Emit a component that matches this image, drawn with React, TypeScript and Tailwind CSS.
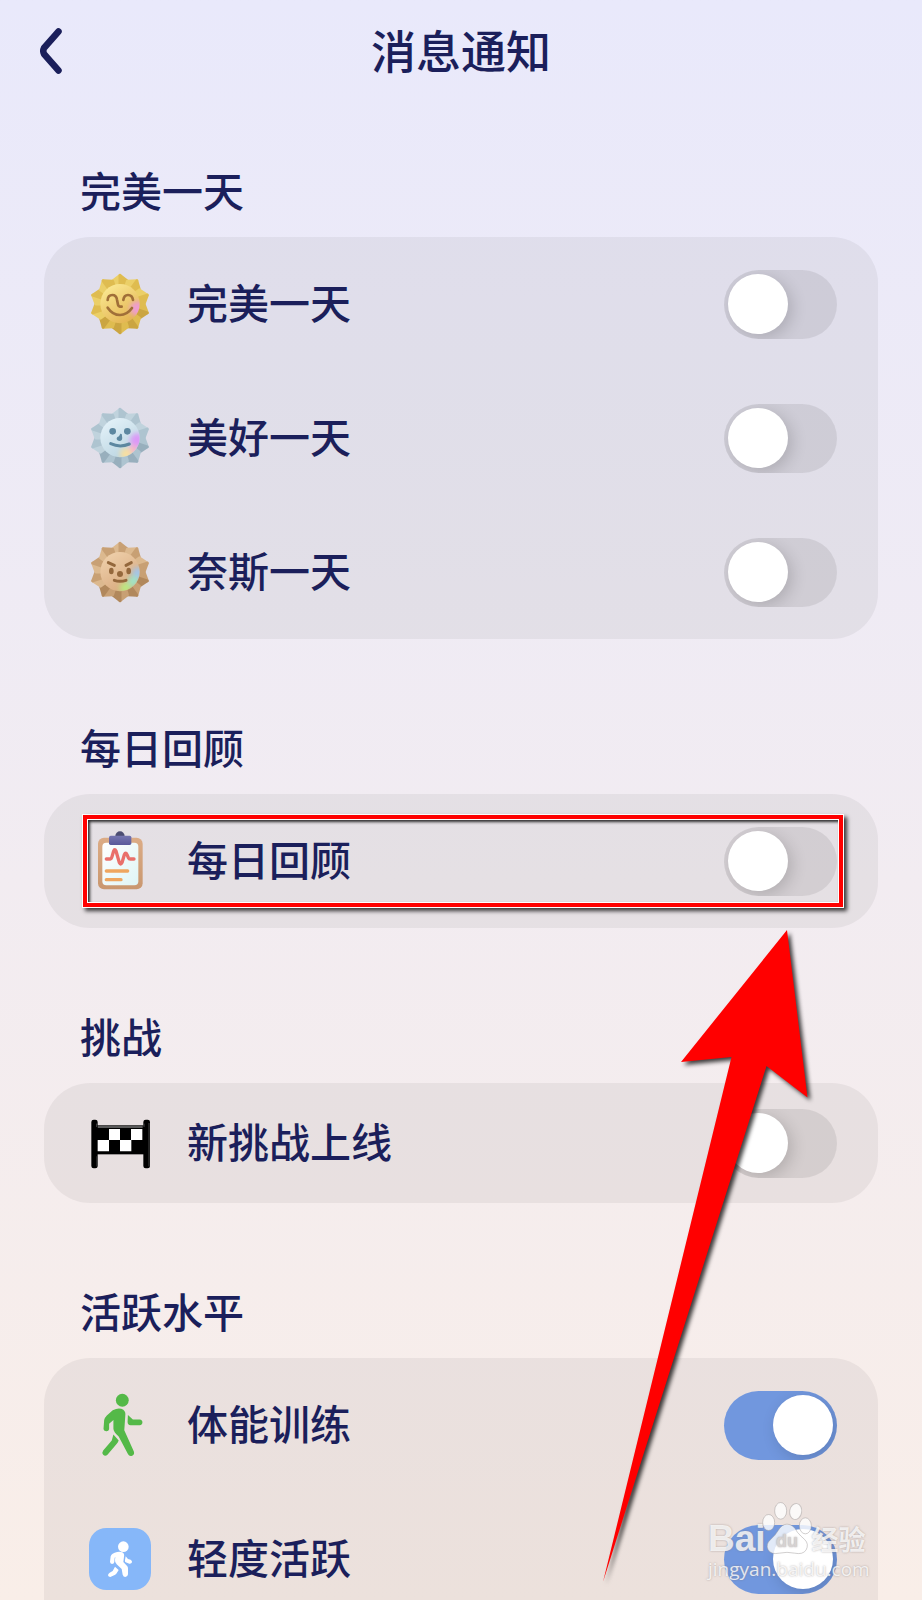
import React from "react";

type Theme = {
  id: string;
  light: string;
  mid: string;
  dark: string;
  face: [string, string];
  ink: string;
};

const gold: Theme = { id: "gold", light: "#ebcf68", mid: "#dfbc50", dark: "#cba541", face: ["#fbe993", "#e2b14e"], ink: "#a06f38" };
const silver: Theme = { id: "silver", light: "#c0d3dd", mid: "#aec4d0", dark: "#98afbd", face: ["#e4f2f9", "#b8d3e0"], ink: "#5d87a0" };
const bronze: Theme = { id: "bronze", light: "#dcb98f", mid: "#c8a074", dark: "#b1885c", face: ["#efd0ab", "#d6a77b"], ink: "#94683c" };

function point(angle: number, radius: number): [number, number] {
  const a = (angle * Math.PI) / 180;
  return [Math.round(Math.sin(a) * radius * 10) / 10, Math.round(-Math.cos(a) * radius * 10) / 10];
}

function SunBadge({ theme, children }: { theme: Theme; children: React.ReactNode }) {
  const rays = Array.from({ length: 10 }, (_, i) => {
    const tip = point(i * 36, 86);
    const left = point(i * 36 - 18, 72);
    const right = point(i * 36 + 18, 72);
    const low = i >= 3 && i <= 6;
    return (
      <g key={i} strokeWidth="9" strokeLinejoin="round">
        <path d={`M0 0 L${left} L${tip} Z`} fill={low ? theme.mid : theme.light} stroke={low ? theme.mid : theme.light} />
        <path d={`M0 0 L${tip} L${right} Z`} fill={low ? theme.dark : theme.mid} stroke={low ? theme.dark : theme.mid} />
      </g>
    );
  });
  return (
    <svg viewBox="-93 -93 186 186" className="size-full" aria-hidden="true">
      <defs>
        <linearGradient id={`${theme.id}-face`} x1="0.2" y1="0" x2="0.8" y2="1">
          <stop offset="0" stopColor={theme.face[0]} />
          <stop offset="1" stopColor={theme.face[1]} />
        </linearGradient>
        <clipPath id={`${theme.id}-clip`}>
          <circle cx="0" cy="-1" r="59" />
        </clipPath>
        <filter id={`${theme.id}-soft`} x="-60%" y="-60%" width="220%" height="220%">
          <feGaussianBlur stdDeviation="8" />
        </filter>
      </defs>
      {rays}
      <circle cx="0" cy="-1" r="59" fill={`url(#${theme.id}-face)`} />
      <g clipPath={`url(#${theme.id}-clip)`}>
        <g filter={`url(#${theme.id}-soft)`}>
          {theme.id === "gold" && <circle cx="52" cy="14" r="22" fill="#ee9bd2" />}
          {theme.id === "silver" && (
            <>
              <circle cx="52" cy="8" r="22" fill="#dc98f8" />
              <circle cx="40" cy="34" r="14" fill="#f9b3c8" />
              <circle cx="18" cy="48" r="18" fill="#f8dfa0" />
            </>
          )}
          {theme.id === "bronze" && (
            <>
              <circle cx="54" cy="4" r="19" fill="#a5c4e6" />
              <circle cx="40" cy="28" r="17" fill="#a0e3c4" />
              <circle cx="16" cy="48" r="17" fill="#bce781" />
            </>
          )}
        </g>
      </g>
      <g fill="none" stroke={theme.ink} strokeWidth="8" strokeLinecap="round" strokeLinejoin="round">
        {children}
      </g>
    </svg>
  );
}

const PerfectDay = () => (
  <SunBadge theme={gold}>
    <path d="M-37 -12 Q-36 -27 -23 -27 Q-11 -27 -9 -13 L-6 2 Q-5 8 5 8" />
    <path d="M10 -12 Q12 -27 24 -27 Q37 -27 39 -12" />
    <path d="M-37 11 Q-22 33 0 33 Q21 33 36 12" />
  </SunBadge>
);

const GoodDay = () => (
  <SunBadge theme={silver}>
    <g fill={silver.ink} stroke="none">
      <circle cx="-22" cy="-20" r="10" />
      <circle cx="22" cy="-20" r="10" />
      <path d="M1 -13 Q7 -14 6 -6 Q9 8 0 9 Q-10 9 -10 1 Q-9 -4 -3 -5 Z" />
    </g>
    <path d="M-28 17 Q0 30 28 18" strokeWidth="9" />
  </SunBadge>
);

const NiceDay = () => (
  <SunBadge theme={bronze}>
    <g fill={bronze.ink} stroke="none">
      <ellipse cx="-26" cy="-3" rx="7" ry="10" />
      <ellipse cx="26" cy="-3" rx="7" ry="10" />
      <circle cx="0" cy="6" r="9" />
    </g>
    <path d="M-35 -28 L-17 -20 M34 -28 L18 -20 M-17 25 Q0 31 18 25" strokeWidth="9" />
  </SunBadge>
);

const Clipboard = () => (
  <svg viewBox="57 90 186 186" className="size-full" aria-hidden="true">
    <defs>
      <linearGradient id="board" x1="0" y1="0" x2="0" y2="1">
        <stop offset="0" stopColor="#dcac86" />
        <stop offset="1" stopColor="#c9976f" />
      </linearGradient>
      <linearGradient id="paper" x1="0" y1="0" x2="1" y2="1">
        <stop offset="0" stopColor="#ffffff" />
        <stop offset="1" stopColor="#dff5f5" />
      </linearGradient>
      <linearGradient id="clip" x1="0" y1="0" x2="0" y2="1">
        <stop offset="0" stopColor="#7676b0" />
        <stop offset="1" stopColor="#59599a" />
      </linearGradient>
    </defs>
    <rect x="84" y="113" width="134" height="155" rx="18" fill="url(#board)" />
    <rect x="97" y="128" width="108" height="128" rx="12" fill="url(#paper)" />
    <circle cx="150" cy="108" r="14" fill="#4c4d72" />
    <rect x="117" y="107" width="67" height="28" rx="5" fill="url(#clip)" />
    <g fill="none" strokeLinecap="round" strokeLinejoin="round" strokeWidth="10">
      <path d="M109 177 H121 Q124 177 126 170 L131 153 Q134 145 138 153 L148 188 Q152 197 156 188 L163 164 Q167 155 171 164 L175 173 Q177 177 181 177 H192" stroke="#e9706b" />
      <path d="M109 213 H173 M109 239 H153" stroke="#efa65f" />
    </g>
  </svg>
);

const Finish = () => (
  <svg viewBox="57 36 186 186" className="size-full" aria-hidden="true">
    <rect x="76" y="76" width="148" height="87" fill="#000" />
    <path d="M82 81 H218" stroke="#777" strokeWidth="4" />
    <path d="M117 87 h33 v33 h-33z M183 87 h34 v33 h-34z M81 120 h36 v34 h-36z M150 120 h34 v34 h-34z" fill="#fff" />
    <rect x="64" y="59" width="19" height="146" rx="7" fill="#000" />
    <rect x="220" y="59" width="20" height="146" rx="7" fill="#000" />
    <path d="M80 72 V80 M222 72 V80 M81 170 V198 M237 70 V198" stroke="#444" strokeWidth="3" strokeLinecap="round" />
  </svg>
);

const Walker = () => (
  <svg viewBox="57 43 186 188" className="size-full overflow-visible" aria-hidden="true">
    <g fill="#54b948">
      <circle cx="157" cy="62" r="19.5" />
      <path d="M128 92 Q148 82 160 91 Q168 97 166 110 L163 153 L192 217 Q195 226 187 230 Q178 233 174 225 L146 172 Q130 157 130 148 L130 122 L117 133 L117 150 Q115 157 108 156 Q100 155 100 149 L102 122 Q104 114 110 108 Z" />
      <path d="M130 166 L146 184 Q144 190 139 195 L112 227 Q105 233 99 227 Q94 221 99 214 L125 184 Z" />
      <path d="M174 107 L189 120 H210 Q218 121 218 129 Q218 137 210 138 H182 Q173 137 173 128 Z" />
    </g>
  </svg>
);

const LightActive = () => (
  <svg viewBox="57 444 186 186" className="size-full" aria-hidden="true">
    <rect x="57" y="444" width="186" height="186" rx="52" fill="#86b7f9" />
    <g fill="#fff">
      <circle cx="160" cy="500" r="16" />
      <path d="M134 518 Q148 513 157 517 Q164 521 162 530 L160 546 L172 559 Q174 562 174 566 L174 583 Q173 591 166 591 Q160 591 158 584 L155 567 L140 553 Q134 547 135 540 L136 531 L134 533 L133 546 Q132 552 126 552 Q120 551 120 545 L122 529 Q124 523 128 521 Z" />
      <path d="M135 560 L146 570 L140 580 Q138 583 134 585 L121 591 Q115 591 114 586 Q114 581 119 578 L128 573 Z" />
      <path d="M167 529 L174 537 L182 539 Q187 542 186 547 Q184 552 178 551 L167 547 Q164 545 165 540 Z" />
    </g>
  </svg>
);

type Item = { id: string; label: string; icon: React.ReactNode; on?: boolean };

function SettingRow({ item, rowClass }: { item: Item; rowClass: string }) {
  return (
    <li className={`flex items-center gap-9 pr-[41px] pl-[45px] ${rowClass}`}>
      <span className="size-[62px] shrink-0">{item.icon}</span>
      <label htmlFor={item.id} className="flex-1 pb-[6px] text-[41px] leading-[60px]">
        {item.label}
      </label>
      <input
        id={item.id}
        type="checkbox"
        role="switch"
        defaultChecked={item.on}
        className="flex h-[69px] w-[113px] shrink-0 appearance-none items-center overflow-hidden rounded-full bg-black/8 px-1 before:size-[60px] before:rounded-full before:bg-white before:shadow-[4px_4px_16px_rgba(0,0,0,0.16)] checked:justify-end checked:bg-[#7197de]"
      />
    </li>
  );
}

function Section({
  title,
  items,
  rowClass = "h-[134px]",
  cardClass = "rounded-[46px]",
  children,
}: {
  title: string;
  items: Item[];
  rowClass?: string;
  cardClass?: string;
  children?: React.ReactNode;
}) {
  return (
    <section>
      <h2 className="mb-5 pl-9 text-[41px] leading-[55px] font-medium">{title}</h2>
      <div className={`relative bg-black/5 ${cardClass}`}>
        <ul>
          {items.map((item) => (
            <SettingRow key={item.id} item={item} rowClass={rowClass} />
          ))}
        </ul>
        {children}
      </div>
    </section>
  );
}

function Watermark() {
  return (
    <div className="absolute right-[50px] bottom-[19px] flex w-[164px] flex-col text-white/80 [text-shadow:0_0_2px_rgba(120,110,110,0.6)]">
      <div className="flex h-[60px] items-end">
        <span className="font-['Liberation_Sans',sans-serif] text-[37px] leading-9 font-bold">Bai</span>
        <svg viewBox="0 0 150 170" className="-ml-1 h-[57px] w-[50px] shrink-0" role="img" aria-label="du">
          <g fill="#fff" fillOpacity="0.8" stroke="#9a9494" strokeOpacity="0.45" strokeWidth="3">
            <ellipse cx="20" cy="67" rx="18" ry="24" />
            <ellipse cx="56" cy="32" rx="18" ry="25" />
            <ellipse cx="101" cy="34" rx="18" ry="24" transform="rotate(10 101 34)" />
            <ellipse cx="130" cy="77" rx="18" ry="24" />
            <path d="M75 72 Q94 72 106 96 Q116 108 128 118 Q142 132 132 150 Q122 164 98 159 Q75 154 52 159 Q26 164 18 148 Q10 132 26 118 Q40 106 48 92 Q59 72 75 72 Z" />
          </g>
          <text x="75" y="140" textAnchor="middle" fontFamily="Liberation Sans, sans-serif" fontSize="54" fontWeight="700" fill="#d6d2d2">
            du
          </text>
        </svg>
        <span className="text-[27px] leading-9 font-bold">经验</span>
      </div>
      <span className="font-['Open_Sans',sans-serif] text-[19px] leading-6 font-normal">jingyan.baidu.com</span>
    </div>
  );
}

export default function App() {
  return (
    <div className="relative h-screen overflow-hidden bg-linear-to-b from-[#e9e9fb] via-[#f2ecf1] via-55% to-[#f9eee8] font-['Noto_Sans_CJK_SC',sans-serif] font-medium text-[#1b1f5b]">
      <header className="grid h-[104px] grid-cols-[1fr_auto_1fr] items-center px-9">
        <button type="button" aria-label="返回" className="w-8">
          <svg viewBox="0 0 32 54" className="h-[54px] w-8" fill="none" stroke="currentColor" strokeWidth="6.5" strokeLinecap="round" strokeLinejoin="round" aria-hidden="true">
            <path d="M22.500 6.500 L8 23 Q6.500 26 8 29 L22.500 45.500" />
          </svg>
        </button>
        <h1 className="pb-1 text-[45px] leading-[60px] font-medium">消息通知</h1>
      </header>

      <main className="flex flex-col gap-20 px-11 pt-[58px]">
        <Section
          title="完美一天"
          items={[
            { id: "perfect", label: "完美一天", icon: <PerfectDay /> },
            { id: "good", label: "美好一天", icon: <GoodDay /> },
            { id: "nice", label: "奈斯一天", icon: <NiceDay /> },
          ]}
        />
        <Section title="每日回顾" items={[{ id: "review", label: "每日回顾", icon: <Clipboard /> }]}>
          <div className="pointer-events-none absolute inset-y-5 right-[34px] left-[38px] border border-white/90 shadow-[3px_3px_4px_rgba(0,0,0,0.75)]">
            <div className="size-full border-4 border-[#ff0000]">
              <div className="size-full border border-white shadow-[inset_2px_2px_3px_rgba(0,0,0,0.8)]" />
            </div>
          </div>
        </Section>
        <Section title="挑战" rowClass="h-[120px]" items={[{ id: "challenge", label: "新挑战上线", icon: <Finish /> }]} />
        <Section
          title="活跃水平"
          cardClass="rounded-t-[46px] pb-11"
          items={[
            { id: "training", label: "体能训练", icon: <Walker />, on: true },
            { id: "light", label: "轻度活跃", icon: <LightActive />, on: true },
          ]}
        />
      </main>

      <svg
        viewBox="0 0 140 660"
        className="pointer-events-none absolute top-[926px] right-[108px] h-[660px] w-[140px] overflow-visible drop-shadow-[3px_3px_2px_rgba(0,0,0,0.75)]"
        aria-hidden="true"
      >
        <path d="M113 4 L133.500 171.500 L92.500 140 L-71 656 L57.500 131 L7 136 Z" fill="#f00" />
      </svg>
      <Watermark />
    </div>
  );
}
